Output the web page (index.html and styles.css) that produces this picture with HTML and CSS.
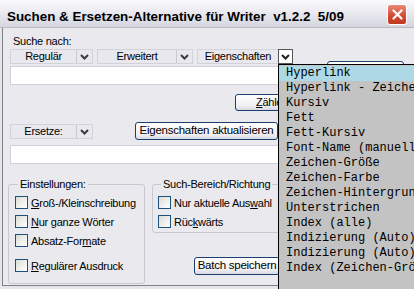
FILE: index.html
```html
<!DOCTYPE html>
<html lang="de">
<head>
    <meta charset="UTF-8">
    <title>Suchen &amp; Ersetzen-Alternative für Writer</title>
    <link rel="stylesheet" href="styles.css">
</head>
<body>
    <div class="window">
        <div class="titlebar">
            <span class="title">Suchen &amp; Ersetzen-Alternative für Writer&nbsp; v1.2.2&nbsp; 5/09</span>
            <span class="close">
                <svg width="11" height="11" viewBox="0 0 11 11"><path d="M1.5 1.5 L9.5 9.5 M9.5 1.5 L1.5 9.5" stroke="#fff" stroke-width="2.2" stroke-linecap="round"/></svg>
            </span>
        </div>
        <div class="client">
            <div class="label">Suche nach:</div>
            <div class="row combos">
                <div class="combo w-reg"><span class="combo-text">Regulär</span><span class="arrow"><svg width="9" height="6" viewBox="0 0 9 6"><path d="M1 1 L4.5 4.5 L8 1" fill="none" stroke="#3a3a44" stroke-width="2"/></svg></span></div>
                <div class="combo w-erw"><span class="combo-text">Erweitert</span><span class="arrow"><svg width="9" height="6" viewBox="0 0 9 6"><path d="M1 1 L4.5 4.5 L8 1" fill="none" stroke="#3a3a44" stroke-width="2"/></svg></span></div>
                <div class="combo w-eig"><span class="combo-text">Eigenschaften</span><span class="arrow open"><svg width="9" height="6" viewBox="0 0 9 6"><path d="M1 1 L4.5 4.5 L8 1" fill="none" stroke="#222" stroke-width="2"/></svg></span></div>
                <div class="btn hidden-btn">Suchen</div>
            </div>
            <div class="textbox"></div>
            <div class="row count-row">
                <div class="btn count-btn"><u>Z</u>ählen</div>
            </div>
            <div class="row replace-row">
                <div class="combo w-reg"><span class="combo-text">Ersetze:</span><span class="arrow"><svg width="9" height="6" viewBox="0 0 9 6"><path d="M1 1 L4.5 4.5 L8 1" fill="none" stroke="#3a3a44" stroke-width="2"/></svg></span></div>
                <div class="btn update-btn">Eigenschaften aktualisieren</div>
            </div>
            <div class="textbox"></div>
            <div class="row bottom">
                <fieldset class="group settings">
                    <legend>Einstellungen:</legend>
                    <label class="check"><span class="box"></span><span><u>G</u>roß-/Kleinschreibung</span></label>
                    <label class="check"><span class="box"></span><span><u>N</u>ur ganze Wörter</span></label>
                    <label class="check"><span class="box"></span><span>Absatz-For<u>m</u>ate</span></label>
                    <label class="check gap"><span class="box"></span><span><u>R</u>egulärer Ausdruck</span></label>
                </fieldset>
                <div class="right-col">
                    <fieldset class="group scope">
                        <legend>Such-Bereich/Richtung</legend>
                        <label class="check"><span class="box"></span><span>Nur aktuelle Aus<u>w</u>ahl</span></label>
                        <label class="check"><span class="box"></span><span>Rüc<u>k</u>wärts</span></label>
                    </fieldset>
                    <div class="btn batch-btn">Batch speichern</div>
                </div>
            </div>
        </div>
        <ul class="popup">
            <li class="selected">Hyperlink</li>
            <li>Hyperlink - Zeichenvorlage</li>
            <li>Kursiv</li>
            <li>Fett</li>
            <li>Fett-Kursiv</li>
            <li>Font-Name (manuell)</li>
            <li>Zeichen-Größe</li>
            <li>Zeichen-Farbe</li>
            <li>Zeichen-Hintergrund</li>
            <li>Unterstrichen</li>
            <li>Index (alle)</li>
            <li>Indizierung (Auto)</li>
            <li>Indizierung (Auto)</li>
            <li>Index (Zeichen-Größe)</li>
        </ul>
    </div>
</body>
</html>
```
FILE: styles.css
```css
body {
    margin: 0;
    font-family: "Liberation Sans", Arial, sans-serif;
    font-size: 11px;
    letter-spacing: -0.25px;
    color: #000;
    background: #d4d0d8;
}
.window {
    position: relative;
    width: 414px;
    height: 289px;
    overflow: hidden;
    background: #e6e6ea;
}
.titlebar {
    height: 28px;
    display: flex;
    align-items: center;
    justify-content: space-between;
    padding: 0 7px 0 7px;
    background: linear-gradient(#fbfbfd, #e4e4ec 60%, #d6d6e0);
    border-bottom: 1px solid #b8b8c4;
    box-sizing: border-box;
}
.title {
    font-weight: bold;
    font-size: 13.4px;
    letter-spacing: 0;
    padding-top: 5px;
    white-space: nowrap;
}
.close {
    width: 20px;
    height: 21px;
    margin-top: 2px;
    border-radius: 3px;
    border: 1px solid #fff;
    box-sizing: border-box;
    background: linear-gradient(#e98a77, #d5472f 60%, #c03a22);
    display: flex;
    align-items: center;
    justify-content: center;
}
.client {
    height: 258px;
    border-left: 1px solid #7f7f88;
    border-bottom: 1px solid #7f7f88;
    margin-left: 2px;
    padding: 5px 10px 0 7px;
    box-sizing: border-box;
    background: #e9e9ee;
}
.label {
    height: 16px;
    line-height: 16px;
    padding-left: 3px;
}
.row {
    display: flex;
    align-items: flex-start;
}
.combos {
    gap: 4px;
    height: 16px;
}
.combo {
    display: flex;
    height: 15px;
    border: 1px solid #d2d2da;
    box-sizing: border-box;
    background: #e8e8ee;
}
.combo-text {
    flex: 1;
    text-align: center;
    line-height: 13px;
}
.arrow {
    width: 15px;
    border-left: 1px solid #c8c8d0;
    display: flex;
    align-items: center;
    justify-content: center;
}
.arrow.open {
    background: #fff;
    border: 1px solid #555;
    margin: -1px -1px -1px 0;
    height: 15px;
    box-sizing: border-box;
}
.w-reg { width: 84px; }
.w-erw { width: 97px; }
.w-eig { width: 97px; }
.hidden-btn {
    margin: 12px 0 0 30px;
    width: 78px;
    height: 16px;
}
.textbox {
    height: 19px;
    margin-top: 1px;
    background: #fff;
    border: 1px solid #d0d0d8;
    box-sizing: border-box;
}
.btn {
    border: 1px solid #1c3d70;
    border-radius: 3px;
    background: linear-gradient(#ffffff, #f0f0f4 70%, #d8d8e2);
    text-align: center;
    box-sizing: border-box;
    line-height: 15px;
    white-space: nowrap;
}
.count-row {
    height: 37px;
    padding: 9px 0 0 225px;
    box-sizing: border-box;
}
.count-btn {
    width: 74px;
    height: 17px;
}
.replace-row {
    height: 22px;
    gap: 42px;
}
.replace-row .combo {
    width: 83px;
    margin-top: 2px;
}
.update-btn {
    width: 143px;
    height: 18px;
    font-size: 11.5px;
}
.bottom {
    margin-top: 14px;
    gap: 7px;
}
.group {
    margin: 0;
    min-width: 0;
    padding: 3px 2px 0 6px;
    border: 1px solid #c8c8d0;
    border-radius: 3px;
    box-sizing: border-box;
    white-space: nowrap;
}
.group legend {
    padding: 0 2px;
    margin-left: 3px;
}
.settings {
    width: 137px;
    height: 106px;
    margin-left: -2px;
}
.right-col {
    display: flex;
    flex-direction: column;
    align-items: flex-end;
    width: 128px;
}
.scope {
    width: 128px;
    height: 55px;
    padding-left: 5px;
}
.check {
    display: flex;
    align-items: center;
    gap: 3px;
    height: 19px;
}
.check.gap {
    margin-top: 6px;
}
.box {
    flex: none;
    width: 13px;
    height: 13px;
    border: 1px solid #1c5180;
    box-sizing: border-box;
    background: linear-gradient(135deg, #dcdcd6, #ffffff);
}
.batch-btn {
    width: 86px;
    height: 18px;
    margin-top: 24px;
    font-size: 11.5px;
}
.popup {
    position: absolute;
    left: 278px;
    top: 64px;
    width: 150px;
    height: 240px;
    margin: 0;
    padding: 1px 0 0 0;
    list-style: none;
    background: #c3c3c3;
    border: 1px solid #000;
    font-family: "Liberation Mono", "Courier New", monospace;
    font-size: 12px;
    letter-spacing: 0;
}
.popup li {
    height: 15px;
    line-height: 15px;
    padding-left: 7px;
    white-space: nowrap;
}
.popup li.selected {
    background: #add8e6;
}
```
